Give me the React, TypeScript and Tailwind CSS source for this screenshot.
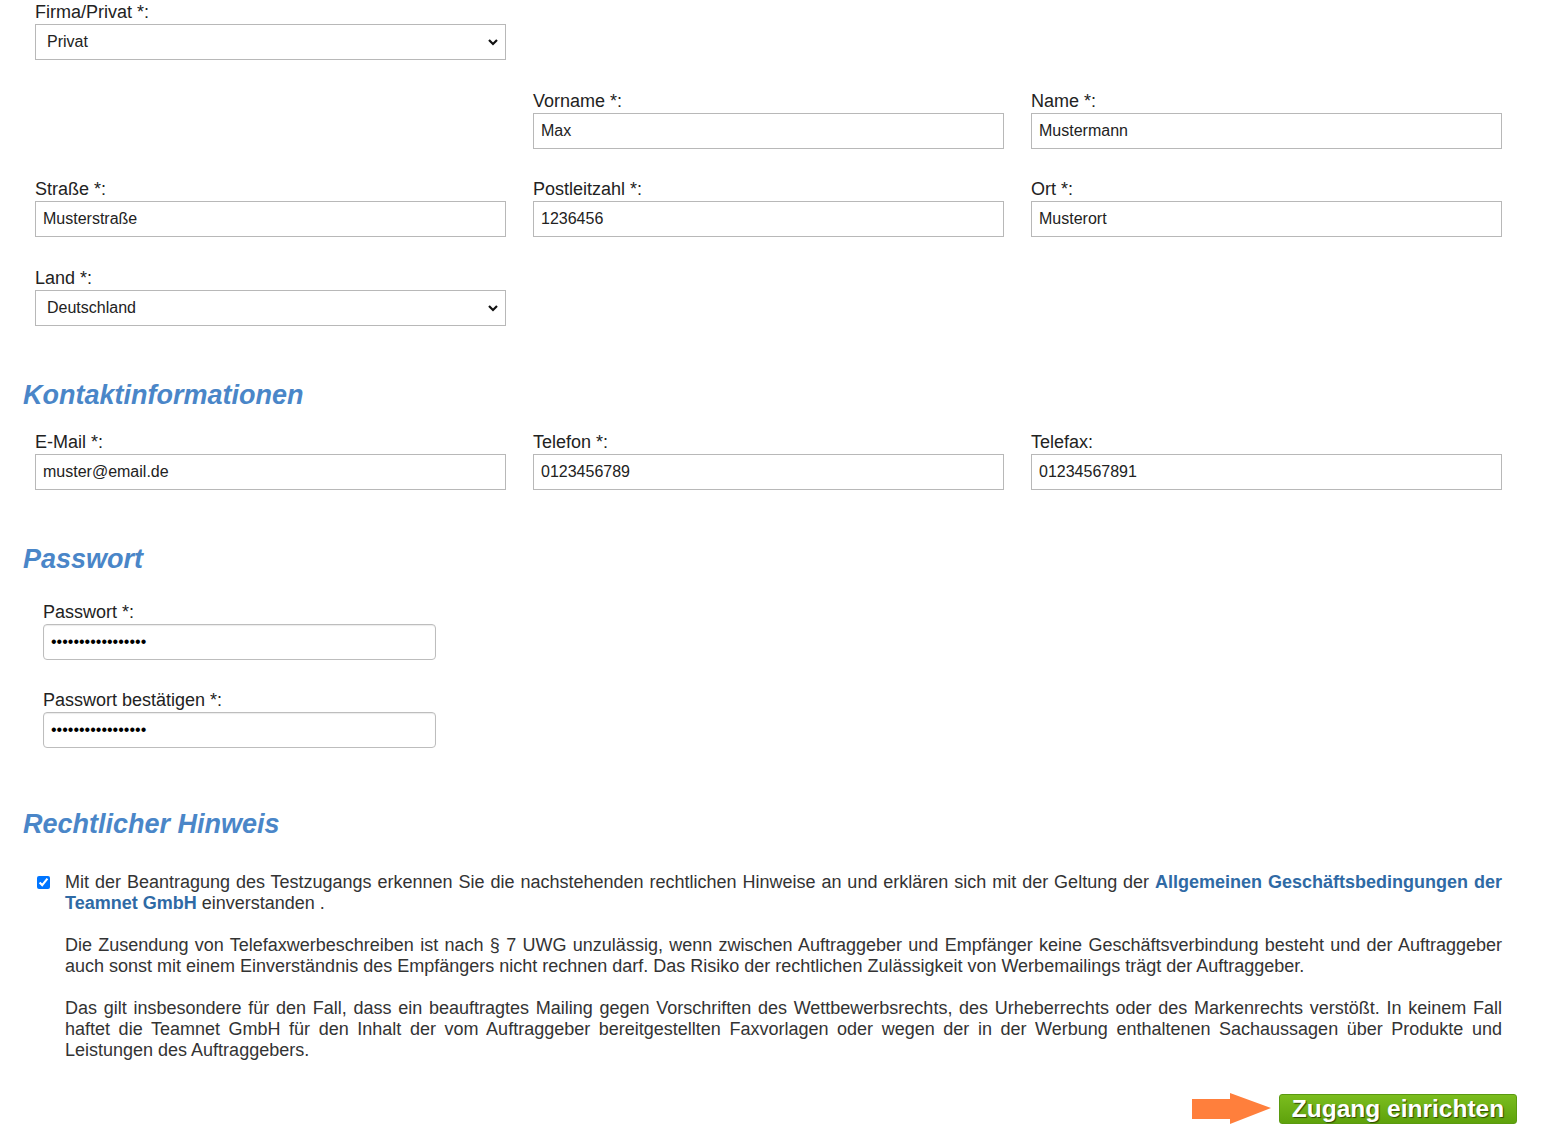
import type { ReactNode } from "react";

const font = { fontFamily: '"Liberation Sans", Arial, sans-serif' };

function Label({ children }: { children: ReactNode }) {
  return <label className="block pt-[1px] text-[18px] leading-[23px] text-[#222]">{children}</label>;
}

function TextField({ label, value }: { label: string; value: string }) {
  return (
    <div>
      <Label>{label}</Label>
      <input
        type="text"
        defaultValue={value}
        className="block w-full h-[36px] border border-[#b8b8b8] bg-white px-[7px] text-[16px] text-[#222] outline-none"
      />
    </div>
  );
}

function SelectField({ label, value }: { label: string; value: string }) {
  return (
    <div>
      <Label>{label}</Label>
      <div className="flex h-[36px] items-center justify-between border border-[#b8b8b8] bg-white pl-[11px] pr-[6px] text-[16px] text-[#222]">
        <span>{value}</span>
        <svg width="12" height="8" viewBox="0 0 12 8">
          <path d="M2 2 L6 6 L10 2" fill="none" stroke="#111" strokeWidth="2.2" />
        </svg>
      </div>
    </div>
  );
}

function PasswordField({ label }: { label: string }) {
  return (
    <div className="w-[393px]">
      <Label>{label}</Label>
      <input
        type="password"
        defaultValue="passwortpasswort1"
        className="block w-full h-[36px] rounded-[4px] border border-[#bdbdbd] bg-white px-[7px] text-[16px] text-black outline-none shadow-[inset_0_1px_1px_rgba(0,0,0,0.08)]"
      />
    </div>
  );
}

function Heading({ children, className }: { children: ReactNode; className: string }) {
  return (
    <h2 className={`pl-[23px] text-[27px] leading-[32px] font-bold italic text-[#4a86c8] ${className}`}>
      {children}
    </h2>
  );
}

export default function App() {
  return (
    <div style={font} className="min-h-[1140px] w-full bg-white text-[#333]">
      <div className="grid grid-cols-[471px_471px_471px] gap-x-[27px] gap-y-[28.5px] pl-[35px]">
        <SelectField label="Firma/Privat *:" value="Privat" />
        <div className="col-span-2" />
        <div />
        <TextField label="Vorname *:" value="Max" />
        <TextField label="Name *:" value="Mustermann" />
        <TextField label="Straße *:" value="Musterstraße" />
        <TextField label="Postleitzahl *:" value="1236456" />
        <TextField label="Ort *:" value="Musterort" />
        <SelectField label="Land *:" value="Deutschland" />
      </div>

      <Heading className="mt-[53px]">Kontaktinformationen</Heading>
      <div className="mt-[19px] grid grid-cols-[471px_471px_471px] gap-x-[27px] pl-[35px]">
        <TextField label="E-Mail *:" value="muster@email.de" />
        <TextField label="Telefon *:" value="0123456789" />
        <TextField label="Telefax:" value="01234567891" />
      </div>

      <Heading className="mt-[53px]">Passwort</Heading>
      <div className="mt-[25px] flex flex-col gap-[28px] pl-[43px]">
        <PasswordField label="Passwort *:" />
        <PasswordField label="Passwort bestätigen *:" />
      </div>

      <Heading className="mt-[60px]">Rechtlicher Hinweis</Heading>
      <div className="mt-[32px] flex w-[1502px] pl-[37px] text-[18px] leading-[21px] text-[#333]">
        <div className="w-[28px] shrink-0 pt-[4px]">
          <input type="checkbox" defaultChecked className="m-0 block h-[13px] w-[13px] accent-[#0075ff]" />
        </div>
        <div className="flex-1 text-justify">
          <p>
            Mit der Beantragung des Testzugangs erkennen Sie die nachstehenden rechtlichen Hinweise an und
            erklären sich mit der Geltung der{" "}
            <a href="#" className="font-bold text-[#2f6aa5]">
              Allgemeinen Geschäftsbedingungen der Teamnet GmbH
            </a>{" "}
            einverstanden .
          </p>
          <p className="mt-[21px]">
            Die Zusendung von Telefaxwerbeschreiben ist nach § 7 UWG unzulässig, wenn zwischen Auftraggeber und
            Empfänger keine Geschäftsverbindung besteht und der Auftraggeber auch sonst mit einem Einverständnis des
            Empfängers nicht rechnen darf. Das Risiko der rechtlichen Zulässigkeit von Werbemailings trägt der
            Auftraggeber.
          </p>
          <p className="mt-[21px]">
            Das gilt insbesondere für den Fall, dass ein beauftragtes Mailing gegen Vorschriften des
            Wettbewerbsrechts, des Urheberrechts oder des Markenrechts verstößt. In keinem Fall haftet die Teamnet
            GmbH für den Inhalt der vom Auftraggeber bereitgestellten Faxvorlagen oder wegen der in der Werbung
            enthaltenen Sachaussagen über Produkte und Leistungen des Auftraggebers.
          </p>
        </div>
      </div>

      <div className="mt-[32px] flex items-center justify-end gap-[7px] pr-[49px]">
        <svg width="80" height="32" viewBox="0 0 80 32">
          <polygon points="0,6 38,6 38,0 79,15 38,31 38,26 0,26" fill="#ff7f3c" />
        </svg>
        <button className="h-[30px] w-[238px] rounded-[3px] border border-[#5a9a10] bg-linear-to-b from-[#7bbd1e] to-[#5ea20b] text-[24.5px] leading-[28px] font-bold text-white [text-shadow:1px_1px_1px_#2f4a00]">
          Zugang einrichten
        </button>
      </div>
    </div>
  );
}
